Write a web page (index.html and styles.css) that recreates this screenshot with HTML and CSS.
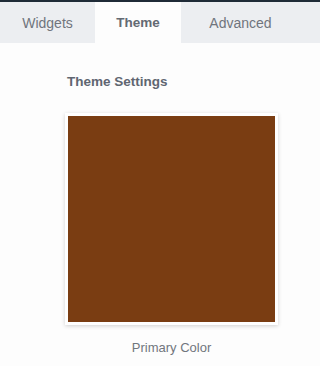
FILE: index.html
```html
<!DOCTYPE html>
<html>
<head>
<meta charset="utf-8">
<link rel="stylesheet" href="styles.css">
</head>
<body>
<div class="topbar"></div>
<div class="tabs">
  <div class="tab">Widgets</div>
  <div class="tab active">Theme</div>
  <div class="tab">Advanced</div>
</div>
<div class="content">
  <h2 class="heading">Theme Settings</h2>
  <div class="swatch"><div class="swatch-fill"></div></div>
  <div class="label">Primary Color</div>
</div>
</body>
</html>
```
FILE: styles.css
```css
html, body {
  margin: 0;
  padding: 0;
  background: #fdfdfd;
  font-family: "Liberation Sans", Arial, sans-serif;
}
.topbar {
  height: 2px;
  background: #1f2b37;
}
.tabs {
  display: grid;
  grid-template-columns: 95px 86px 119px;
  height: 41px;
  background: #eceef1;
}
.tab {
  display: flex;
  align-items: center;
  justify-content: center;
  font-size: 14px;
  color: #70757d;
}
.tab.active {
  background: #fdfdfd;
  font-weight: bold;
  font-size: 13.5px;
  color: #646a73;
}
.content {
  width: 213px;
  padding-left: 65px;
}
.heading {
  margin: 31px 0 0 2px;
  font-size: 13.5px;
  line-height: 16px;
  font-weight: bold;
  color: #5f6671;
}
.swatch {
  margin-top: 23px;
  height: 206px;
  padding: 3px;
  background: #ffffff;
  box-shadow: 0 1px 4px rgba(0, 0, 0, 0.18);
}
.swatch-fill {
  height: 100%;
  background: #7a3d12;
}
.label {
  margin-top: 15px;
  text-align: center;
  font-size: 13px;
  line-height: 15px;
  color: #71767e;
}
```
